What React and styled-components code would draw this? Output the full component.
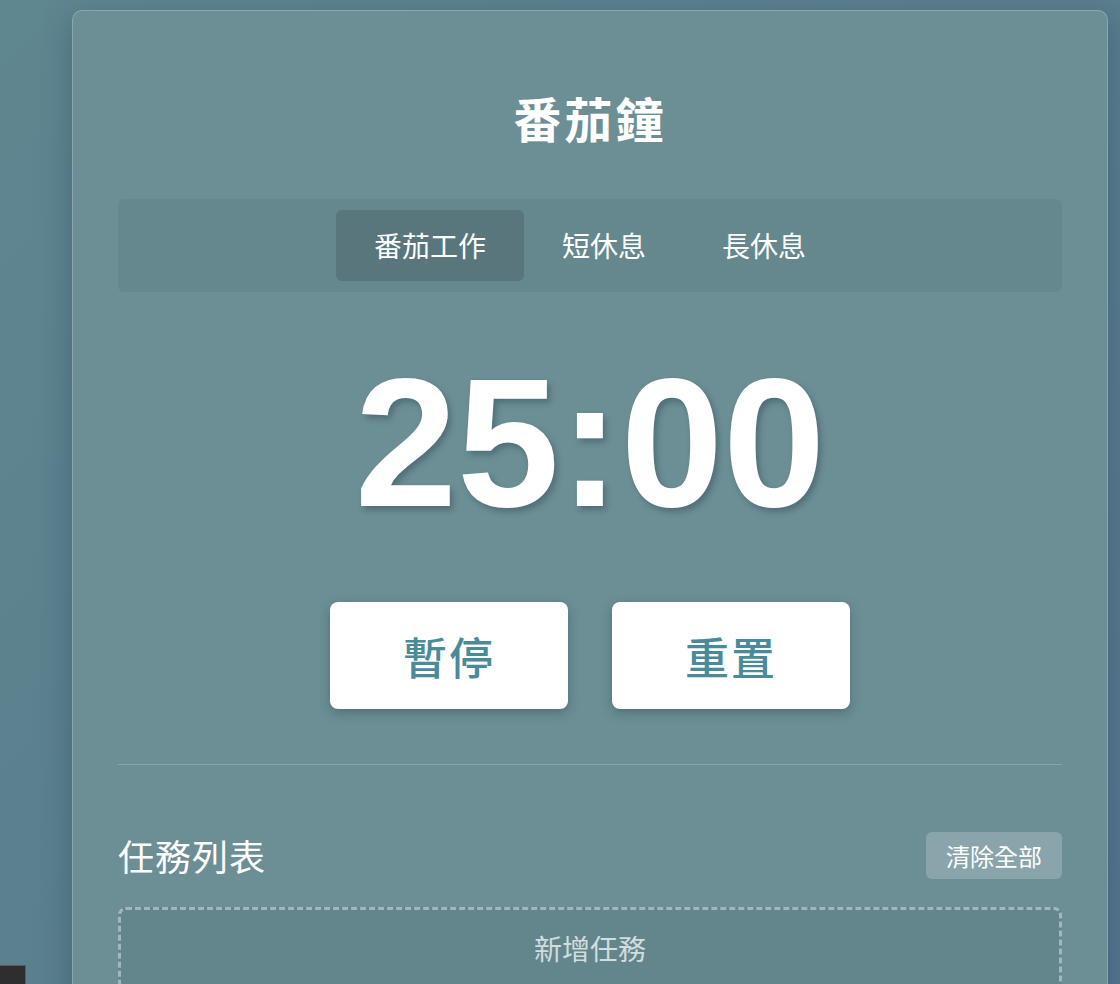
import React, { useState } from "react";
import styled, { createGlobalStyle } from "styled-components";

const GlobalStyle = createGlobalStyle`
  html, body {
    margin: 0;
    padding: 0;
  }
  body {
    min-height: 100vh;
    background: linear-gradient(135deg, #5f8790 0%, #5a7f8e 50%, #557590 100%);
    font-family: "Noto Sans CJK TC", "Noto Sans", sans-serif;
    color: #fff;
  }
`;

const Page = styled.div`
  padding: 10px 12px 40px 72px;
`;

const Card = styled.main`
  background: #6c8f96;
  border: 1px solid rgba(255, 255, 255, 0.22);
  border-radius: 10px;
  box-shadow: 0 8px 32px rgba(20, 40, 70, 0.3);
  padding: 45px 45px 60px;
`;

const Title = styled.h1`
  margin: 32px 0 53px;
  text-align: center;
  font-family: "Noto Sans CJK TC", serif;
  font-size: 48px;
  font-weight: 700;
  line-height: 58px;
  letter-spacing: 3px;
`;

const Tabs = styled.nav`
  display: flex;
  justify-content: center;
  padding: 11px;
  background: rgba(60, 90, 100, 0.12);
  border-radius: 6px;
`;

const Tab = styled.button`
  border: none;
  background: ${({ $active }) => ($active ? "#58767c" : "transparent")};
  color: #fff;
  font-family: "Noto Sans CJK TC", sans-serif;
  font-size: 28px;
  line-height: 39px;
  padding: 16px 38px;
  border-radius: 6px;
  cursor: pointer;
`;

const Timer = styled.div`
  margin: 44px 0 54px;
  text-align: center;
  font-family: "Liberation Sans", Arial, sans-serif;
  font-weight: 700;
  font-size: 184px;
  line-height: normal;
  text-shadow: 3px 4px 6px rgba(30, 50, 60, 0.35);
`;

const Controls = styled.div`
  display: flex;
  justify-content: center;
  gap: 44px;
`;

const ControlButton = styled.button`
  width: 238px;
  height: 107px;
  border: none;
  border-radius: 8px;
  background: #fff;
  color: #4a8b9a;
  font-family: "Noto Sans CJK TC", serif;
  font-size: 44px;
  font-weight: 500;
  letter-spacing: 2px;
  box-shadow: 0 4px 12px rgba(20, 40, 50, 0.3);
  cursor: pointer;
`;

const Divider = styled.hr`
  margin: 55px 0 0;
  border: none;
  border-top: 1px solid rgba(255, 255, 255, 0.2);
`;

const TaskHeader = styled.div`
  display: flex;
  align-items: center;
  justify-content: space-between;
  margin-top: 67px;
`;

const TaskTitle = styled.h2`
  margin: 0;
  font-size: 36px;
  font-weight: 400;
  line-height: 47px;
  letter-spacing: 1px;
`;

const ClearButton = styled.button`
  border: none;
  border-radius: 6px;
  background: rgba(255, 255, 255, 0.2);
  color: #fff;
  font-family: "Noto Sans CJK TC", sans-serif;
  font-size: 24px;
  line-height: 31px;
  padding: 8px 20px;
  cursor: pointer;
`;

const AddTask = styled.button`
  display: block;
  width: 100%;
  margin-top: 28px;
  padding: 18px 0 20px;
  border: 3px dashed rgba(255, 255, 255, 0.4);
  border-radius: 8px;
  background: rgba(40, 70, 80, 0.12);
  color: rgba(255, 255, 255, 0.72);
  font-family: "Noto Sans CJK TC", sans-serif;
  font-size: 28px;
  line-height: 40px;
  cursor: pointer;
`;

const CornerWidget = styled.div`
  position: fixed;
  left: -1px;
  top: 965px;
  width: 25px;
  height: 40px;
  background: #2e2e31;
  border: 1px solid #5a5a5e;
`;

const modes = ["番茄工作", "短休息", "長休息"];

export default function App() {
  const [mode, setMode] = useState(0);

  return (
    <>
      <GlobalStyle />
      <Page>
        <Card>
          <Title>番茄鐘</Title>
          <Tabs>
            {modes.map((m, i) => (
              <Tab key={m} $active={i === mode} onClick={() => setMode(i)}>
                {m}
              </Tab>
            ))}
          </Tabs>
          <Timer>25:00</Timer>
          <Controls>
            <ControlButton>暫停</ControlButton>
            <ControlButton>重置</ControlButton>
          </Controls>
          <Divider />
          <TaskHeader>
            <TaskTitle>任務列表</TaskTitle>
            <ClearButton>清除全部</ClearButton>
          </TaskHeader>
          <AddTask>新增任務</AddTask>
        </Card>
      </Page>
      <CornerWidget />
    </>
  );
}
